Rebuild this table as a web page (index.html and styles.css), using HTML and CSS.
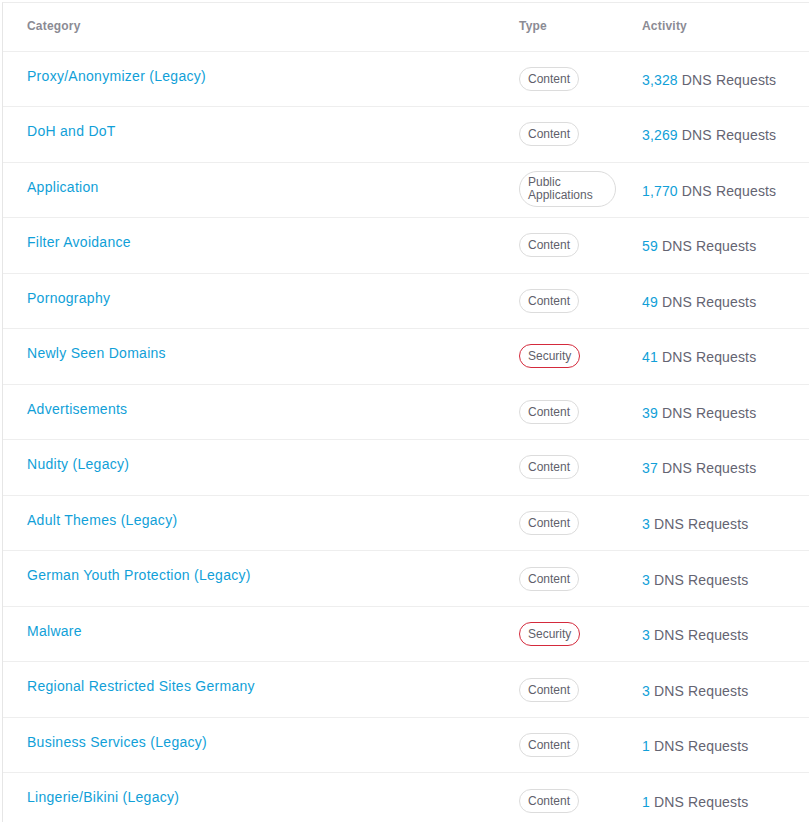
FILE: index.html
```html
<!DOCTYPE html>
<html>
<head>
<meta charset="utf-8">
<link rel="stylesheet" href="styles.css">
</head>
<body>
<div class="table">
  <div class="row head">
    <div class="c-cat">Category</div>
    <div class="c-type">Type</div>
    <div class="c-act">Activity</div>
  </div>
  <div class="row"><div class="c-cat"><a>Proxy/Anonymizer (Legacy)</a></div><div class="c-type"><span class="pill">Content</span></div><div class="c-act"><span class="num">3,328</span> DNS Requests</div></div>
  <div class="row"><div class="c-cat"><a>DoH and DoT</a></div><div class="c-type"><span class="pill">Content</span></div><div class="c-act"><span class="num">3,269</span> DNS Requests</div></div>
  <div class="row"><div class="c-cat"><a>Application</a></div><div class="c-type"><span class="pill multi">Public<br>Applications</span></div><div class="c-act"><span class="num">1,770</span> DNS Requests</div></div>
  <div class="row"><div class="c-cat"><a>Filter Avoidance</a></div><div class="c-type"><span class="pill">Content</span></div><div class="c-act"><span class="num">59</span> DNS Requests</div></div>
  <div class="row"><div class="c-cat"><a>Pornography</a></div><div class="c-type"><span class="pill">Content</span></div><div class="c-act"><span class="num">49</span> DNS Requests</div></div>
  <div class="row"><div class="c-cat"><a>Newly Seen Domains</a></div><div class="c-type"><span class="pill sec">Security</span></div><div class="c-act"><span class="num">41</span> DNS Requests</div></div>
  <div class="row"><div class="c-cat"><a>Advertisements</a></div><div class="c-type"><span class="pill">Content</span></div><div class="c-act"><span class="num">39</span> DNS Requests</div></div>
  <div class="row"><div class="c-cat"><a>Nudity (Legacy)</a></div><div class="c-type"><span class="pill">Content</span></div><div class="c-act"><span class="num">37</span> DNS Requests</div></div>
  <div class="row"><div class="c-cat"><a>Adult Themes (Legacy)</a></div><div class="c-type"><span class="pill">Content</span></div><div class="c-act"><span class="num">3</span> DNS Requests</div></div>
  <div class="row"><div class="c-cat"><a>German Youth Protection (Legacy)</a></div><div class="c-type"><span class="pill">Content</span></div><div class="c-act"><span class="num">3</span> DNS Requests</div></div>
  <div class="row"><div class="c-cat"><a>Malware</a></div><div class="c-type"><span class="pill sec">Security</span></div><div class="c-act"><span class="num">3</span> DNS Requests</div></div>
  <div class="row"><div class="c-cat"><a>Regional Restricted Sites Germany</a></div><div class="c-type"><span class="pill">Content</span></div><div class="c-act"><span class="num">3</span> DNS Requests</div></div>
  <div class="row"><div class="c-cat"><a>Business Services (Legacy)</a></div><div class="c-type"><span class="pill">Content</span></div><div class="c-act"><span class="num">1</span> DNS Requests</div></div>
  <div class="row"><div class="c-cat"><a>Lingerie/Bikini (Legacy)</a></div><div class="c-type"><span class="pill">Content</span></div><div class="c-act"><span class="num">1</span> DNS Requests</div></div>
</div>
</body>
</html>
```

FILE: styles.css
```css
html, body {
  margin: 0;
  padding: 0;
  background: #fff;
}
body {
  font-family: "Liberation Sans", Arial, sans-serif;
  overflow: hidden;
}
.table {
  margin: 2px 0 0 2px;
  width: 806px;
  border-top: 1px solid #ececec;
  border-left: 1px solid #e6e6e6;
}
.row {
  display: grid;
  grid-template-columns: 492px 123px 1fr;
  align-items: center;
  height: 55.54px;
  box-sizing: border-box;
  border-bottom: 1px solid #eeeeee;
  padding-left: 24px;
}
.row.head {
  height: 48.5px;
  font-size: 12px;
  letter-spacing: 0.2px;
  font-weight: bold;
  color: #8b8b94;
}
.row.head > div {
  padding-bottom: 2px;
}
.c-cat {
  align-self: start;
  padding-top: 15px;
  font-size: 14px;
  letter-spacing: 0.28px;
  line-height: 18px;
}
.head .c-cat {
  align-self: center;
  padding-top: 0;
  font-size: 12px;
  letter-spacing: 0.2px;
}
.c-cat a {
  color: #119fd8;
}
.c-type {
  display: flex;
  align-items: center;
}
.pill {
  display: inline-block;
  box-sizing: border-box;
  border: 1px solid #dcdcdc;
  border-radius: 12px;
  padding: 0 8px;
  height: 24px;
  line-height: 22px;
  font-size: 12px;
  color: #5f5f6b;
  white-space: nowrap;
}
.pill.multi {
  height: 36px;
  border-radius: 18px;
  line-height: 13px;
  padding: 4px 22px 4px 8px;
  white-space: normal;
  margin-top: -2px;
}
.pill.sec {
  border-color: #d42a3c;
}
.c-act {
  font-size: 14px;
  letter-spacing: 0.15px;
  color: #646472;
  padding-top: 2px;
}
.head .c-act {
  font-size: 12px;
  letter-spacing: 0.2px;
  color: #8b8b94;
  padding-top: 0;
}
.num {
  color: #119fd8;
}
```
